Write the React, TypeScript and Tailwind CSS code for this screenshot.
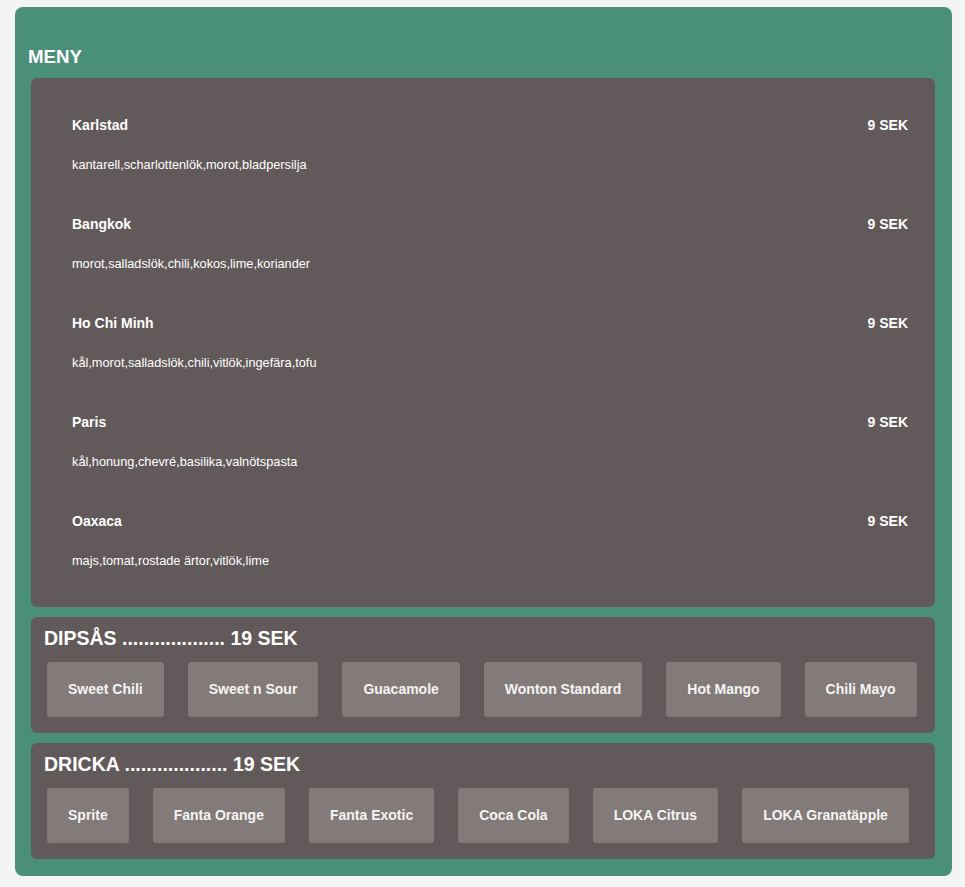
import React from "react";

const items = [
  { name: "Karlstad", desc: "kantarell,scharlottenlök,morot,bladpersilja" },
  { name: "Bangkok", desc: "morot,salladslök,chili,kokos,lime,koriander" },
  { name: "Ho Chi Minh", desc: "kål,morot,salladslök,chili,vitlök,ingefära,tofu" },
  { name: "Paris", desc: "kål,honung,chevré,basilika,valnötspasta" },
  { name: "Oaxaca", desc: "majs,tomat,rostade ärtor,vitlök,lime" },
];

const dips = ["Sweet Chili", "Sweet n Sour", "Guacamole", "Wonton Standard", "Hot Mango", "Chili Mayo"];
const drinks = ["Sprite", "Fanta Orange", "Fanta Exotic", "Coca Cola", "LOKA Citrus", "LOKA Granatäpple"];

function Section({ title, options }: { title: string; options: string[] }) {
  return (
    <div className="ml-[3px] w-[904px] rounded-md bg-[#625a5a] pl-[13px] pt-[9px] pb-[16px]">
      <h2 className="text-[19.5px] leading-[24px] font-bold text-white">
        {title} ................... 19 SEK
      </h2>
      <div className="ml-[3px] mt-[12px] flex gap-[24px]">
        {options.map((o) => (
          <button
            key={o}
            className="h-[55px] rounded-[3px] bg-[#827b79] px-[21px] text-[14px] font-bold text-[#f4f4f4]"
          >
            {o}
          </button>
        ))}
      </div>
    </div>
  );
}

export default function App() {
  return (
    <div
      className="h-[887px] w-full bg-[#f4f4f4] pl-[15px] pt-[7px]"
      style={{ fontFamily: '"Liberation Sans", Arial, sans-serif' }}
    >
      <div className="w-[937px] rounded-lg bg-[#4a9079] pl-[13px] pr-[17px] pt-[39px] pb-[17px]">
        <h3 className="mb-[10px] text-[18.72px] leading-[22px] font-bold text-white">MENY</h3>
        <div className="ml-[3px] w-[904px] rounded-md bg-[#625a5a] pl-[41px] pr-[27px] pt-[37px] pb-[38px]">
          <div className="flex flex-col gap-[41px]">
            {items.map((it) => (
              <div key={it.name} className="text-white">
                <div className="flex h-[20px] items-center justify-between text-[14px] leading-[20px] font-bold">
                  <span>{it.name}</span>
                  <span>9 SEK</span>
                </div>
                <p className="mt-[20px] h-[18px] text-[12.75px] leading-[20px]">{it.desc}</p>
              </div>
            ))}
          </div>
        </div>
        <div className="mt-[10px] flex flex-col gap-[10px]">
          <Section title="DIPSÅS" options={dips} />
          <Section title="DRICKA" options={drinks} />
        </div>
      </div>
    </div>
  );
}
